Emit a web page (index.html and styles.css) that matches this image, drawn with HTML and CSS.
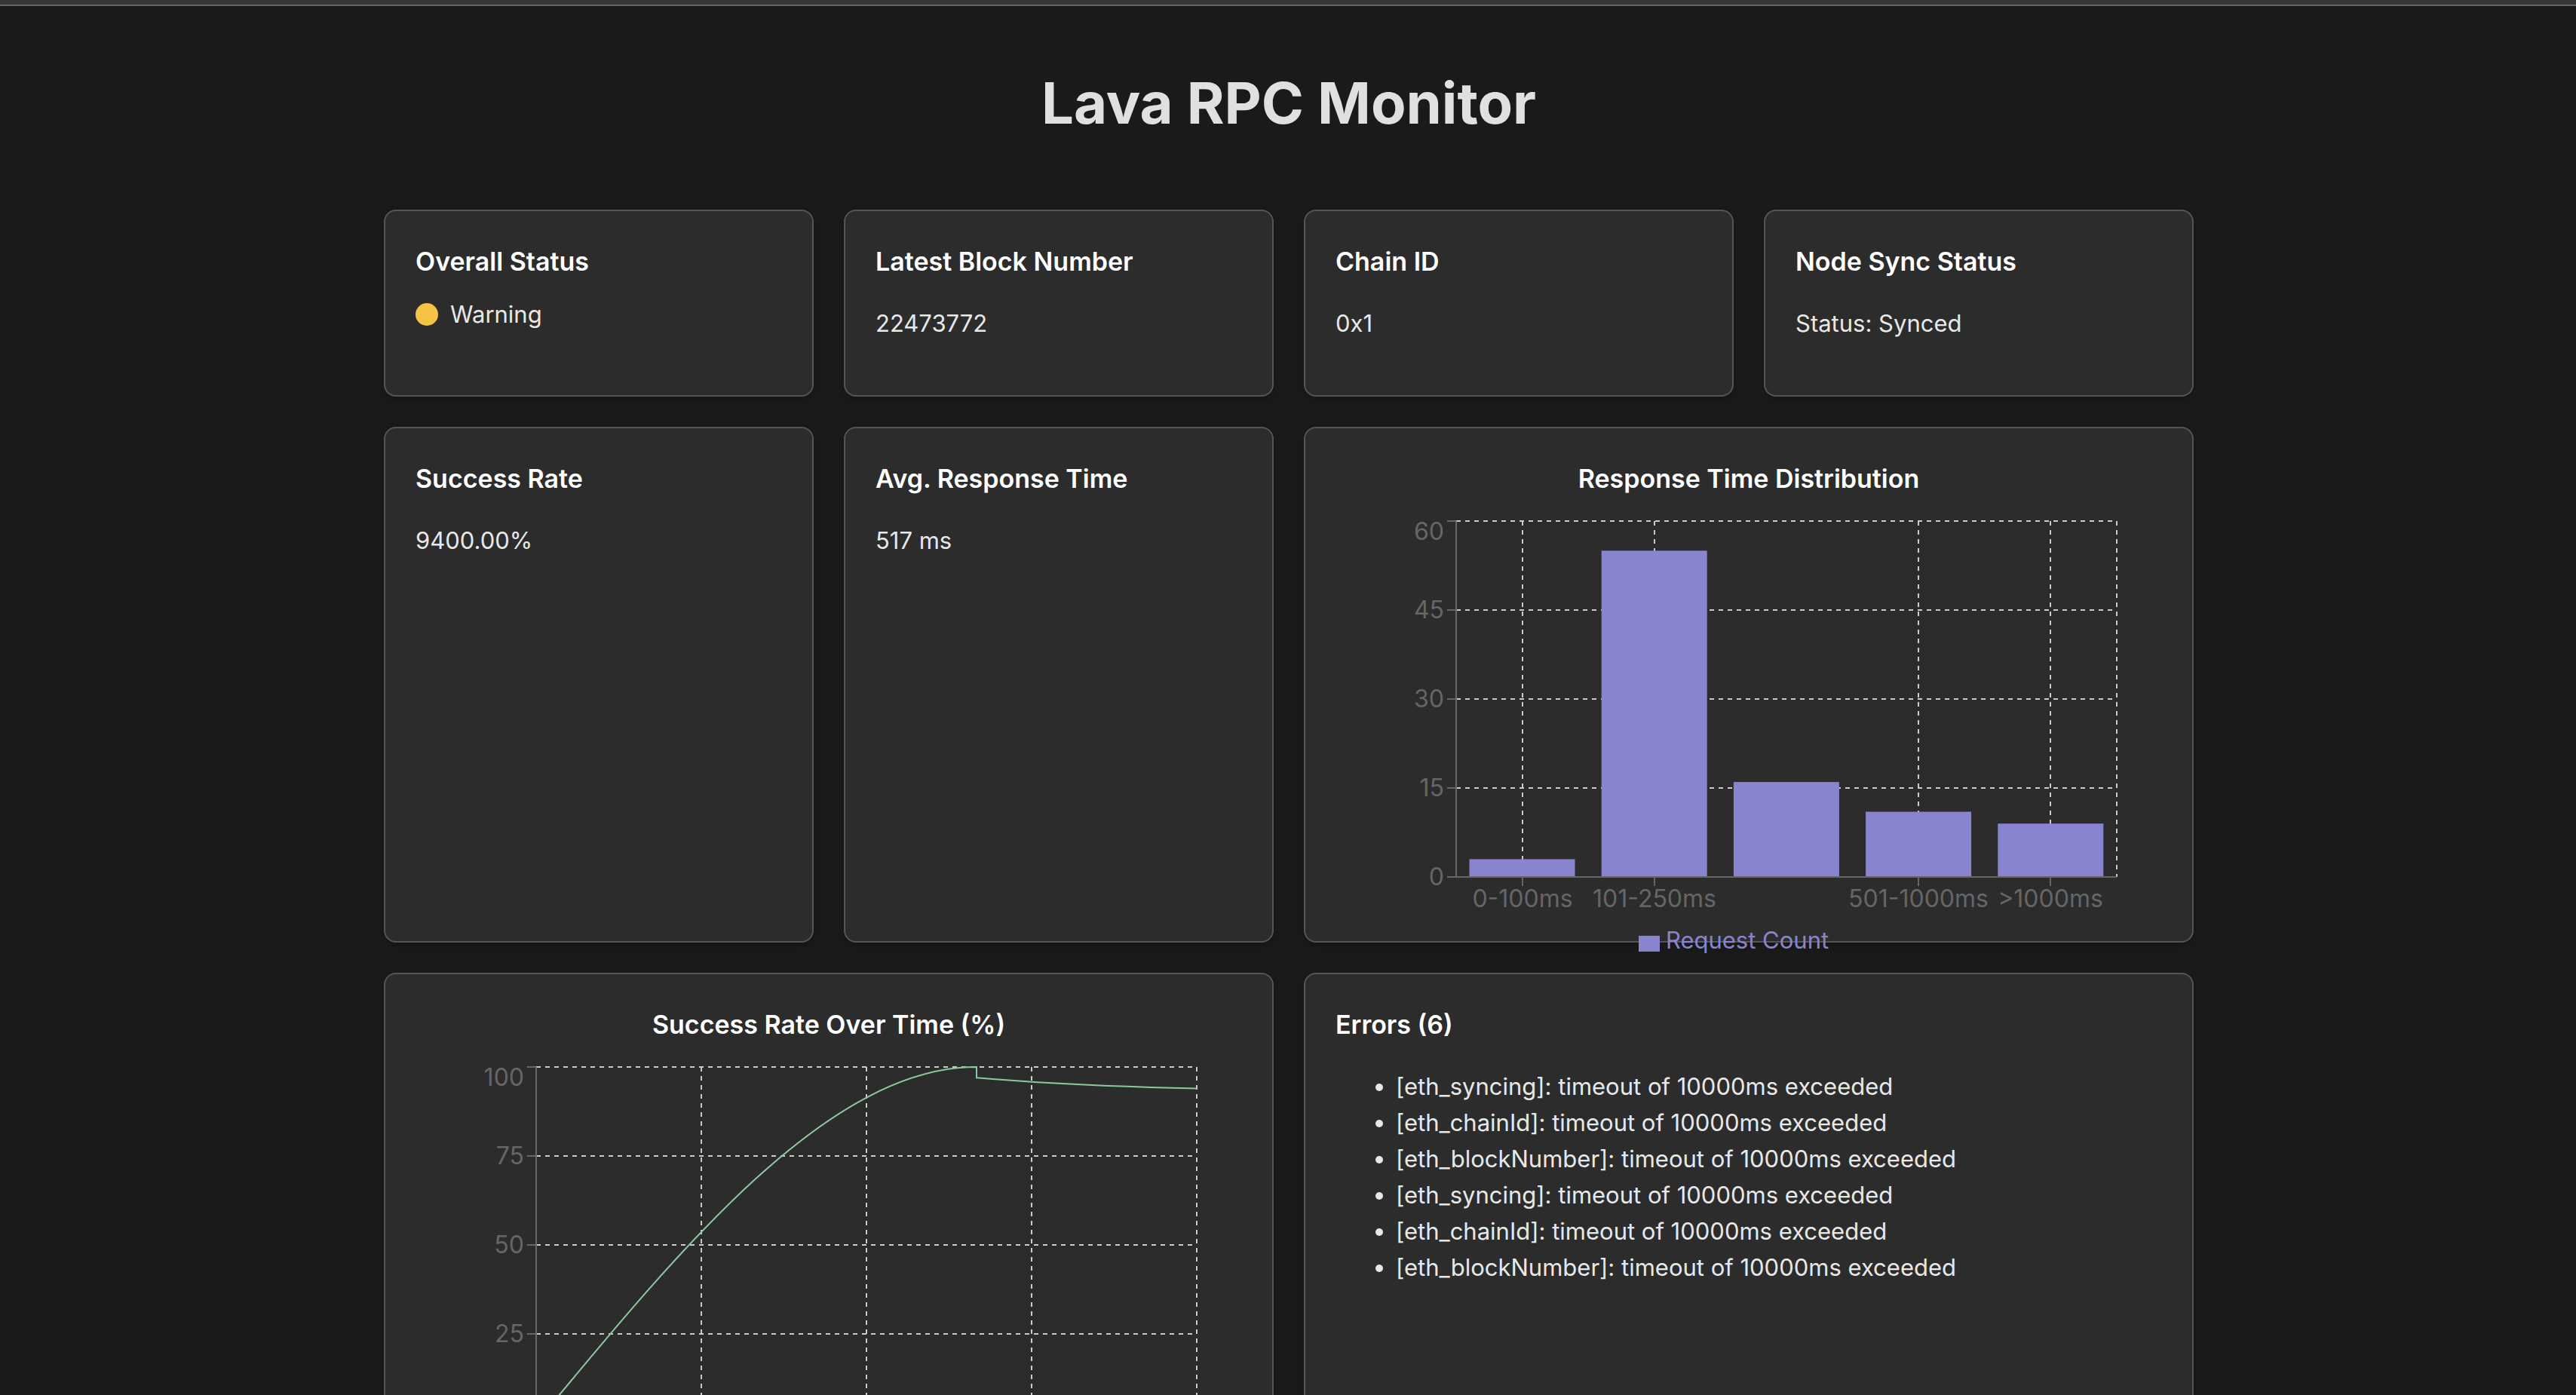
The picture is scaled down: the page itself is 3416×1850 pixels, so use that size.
FILE: index.html
```html
<!DOCTYPE html>
<html lang="en">
<head>
<meta charset="utf-8">
<title>Lava RPC Monitor</title>
<link rel="stylesheet" href="styles.css">
</head>
<body>
<div class="topbar"></div>
<main class="dashboard">
  <h1 class="title">Lava RPC Monitor</h1>
  <div class="grid">
    <section class="card">
      <h2 class="card-title">Overall Status</h2>
      <div class="status"><span class="status-dot"></span>Warning</div>
    </section>
    <section class="card">
      <h2 class="card-title">Latest Block Number</h2>
      <p class="value">22473772</p>
    </section>
    <section class="card">
      <h2 class="card-title">Chain ID</h2>
      <p class="value">0x1</p>
    </section>
    <section class="card">
      <h2 class="card-title">Node Sync Status</h2>
      <p class="value">Status: Synced</p>
    </section>
    <section class="card">
      <h2 class="card-title">Success Rate</h2>
      <p class="value">9400.00%</p>
    </section>
    <section class="card">
      <h2 class="card-title">Avg. Response Time</h2>
      <p class="value">517 ms</p>
    </section>
    <section class="card card-wide">
      <div class="chart">
        <h2 class="card-title">Response Time Distribution</h2>
        <svg class="plot" viewBox="0 0 1096 542" role="img" aria-label="Response time distribution">
          <g class="gridlines">
            <path d="M160 10H1036M160 128H1036M160 246H1036M160 364H1036"/>
            <path d="M248 10V482M423 10V482M773 10V482M948 10V482M1036 10V482"/>
          </g>
          <g class="bars">
            <rect x="177.5" y="458.4" width="140" height="23.6"/>
            <rect x="352.7" y="49.3" width="140" height="432.7"/>
            <rect x="527.9" y="356.1" width="140" height="125.9"/>
            <rect x="703.1" y="395.5" width="140" height="86.5"/>
            <rect x="878.3" y="411.2" width="140" height="70.8"/>
          </g>
          <path class="axis" d="M160 10V482M148 10H160M148 128H160M148 246H160M148 364H160M148 482H1036M248 482V494M423 482V494M773 482V494M948 482V494"/>
          <g class="labels-y">
            <text x="144" y="35">60</text>
            <text x="144" y="139">45</text>
            <text x="144" y="257">30</text>
            <text x="144" y="375">15</text>
            <text x="144" y="493">0</text>
          </g>
          <g class="labels-x">
            <text x="248" y="522">0-100ms</text>
            <text x="423" y="522">101-250ms</text>
            <text x="773" y="522">501-1000ms</text>
            <text x="948" y="522">&gt;1000ms</text>
          </g>
        </svg>
        <div class="legend"><span class="legend-swatch"></span>Request Count</div>
      </div>
    </section>
    <section class="card card-wide">
      <div class="chart">
        <h2 class="card-title">Success Rate Over Time (%)</h2>
        <svg class="plot" viewBox="0 0 1096 542" role="img" aria-label="Success rate over time">
          <g class="gridlines">
            <path d="M160 10H1036M160 128H1036M160 246H1036M160 364H1036"/>
            <path d="M379 10V482M598 10V482M817 10V482M1036 10V482"/>
          </g>
          <path class="axis" d="M160 10V482M148 10H160M148 128H160M148 246H160M148 364H160M148 482H1036"/>
          <path class="line" d="M160 482C354.7 246 549.3 10 744 10V24.3C841 32.6 939 36.5 1036 38.5"/>
          <g class="labels-y">
            <text x="144" y="35">100</text>
            <text x="144" y="139">75</text>
            <text x="144" y="257">50</text>
            <text x="144" y="375">25</text>
          </g>
        </svg>
      </div>
    </section>
    <section class="card card-wide">
      <h2 class="card-title">Errors (6)</h2>
      <ul class="errors">
        <li>[eth_syncing]: timeout of 10000ms exceeded</li>
        <li>[eth_chainId]: timeout of 10000ms exceeded</li>
        <li>[eth_blockNumber]: timeout of 10000ms exceeded</li>
        <li>[eth_syncing]: timeout of 10000ms exceeded</li>
        <li>[eth_chainId]: timeout of 10000ms exceeded</li>
        <li>[eth_blockNumber]: timeout of 10000ms exceeded</li>
      </ul>
    </section>
  </div>
</main>
</body>
</html>
```
FILE: styles.css
```css
* {
  box-sizing: border-box;
}

body {
  margin: 0;
  background: #1a1a1a;
  color: #e8e8e8;
  font-family: Inter, "Liberation Sans", sans-serif;
  font-size: 31px;
  line-height: 48px;
}

.topbar {
  height: 8px;
  background: #363636;
  border-bottom: 2px solid #666;
}

.dashboard {
  max-width: 2482px;
  margin: 0 auto;
  padding: 68px 40px 40px 42px;
}

.title {
  margin: 0 0 82px;
  color: #e0e0e0;
  font-size: 76px;
  font-weight: 700;
  line-height: 120px;
  text-align: center;
}

.grid {
  display: grid;
  grid-template-columns: repeat(4, minmax(0, 1fr));
  gap: 40px;
}

.card {
  padding: 40px;
  background: #2c2c2c;
  border: 2px solid #555;
  border-radius: 16px;
  box-shadow: 0 4px 8px rgba(0, 0, 0, 0.2);
}

.card-wide {
  grid-column: span 2;
}

.card-title {
  margin: 0 0 20px;
  color: #fff;
  font-size: 34px;
  font-weight: 600;
  line-height: 53px;
}

.value {
  margin: 32px 0 31px;
}

.status {
  display: flex;
  align-items: center;
  gap: 16px;
}

.status-dot {
  width: 30px;
  height: 30px;
  border-radius: 50%;
  background: #f6c344;
}

/* The plot and its legend are taller than the panel and run over its edge. */
.chart {
  height: 600px;
  text-align: center;
}

.plot {
  display: block;
  width: 100%;
  overflow: visible;
  font-size: 32px;
}

.gridlines {
  fill: none;
  stroke: #ccc;
  stroke-width: 2;
  stroke-dasharray: 6 6;
}

.axis {
  fill: none;
  stroke: #666;
  stroke-width: 2;
}

.bars {
  fill: #8884d0;
}

.line {
  fill: none;
  stroke: #8cc8a0;
  stroke-width: 2;
}

.labels-x,
.labels-y {
  fill: #666;
}

.labels-x {
  text-anchor: middle;
}

.labels-y {
  text-anchor: end;
}

.legend {
  display: flex;
  align-items: center;
  justify-content: center;
  gap: 8px;
  padding-right: 40px;
  color: #8884d0;
}

.legend-swatch {
  width: 28px;
  height: 21px;
  margin-top: 8px;
  background: #8884d0;
}

.errors {
  margin: 32px 0;
  padding-left: 80px;
}
```
